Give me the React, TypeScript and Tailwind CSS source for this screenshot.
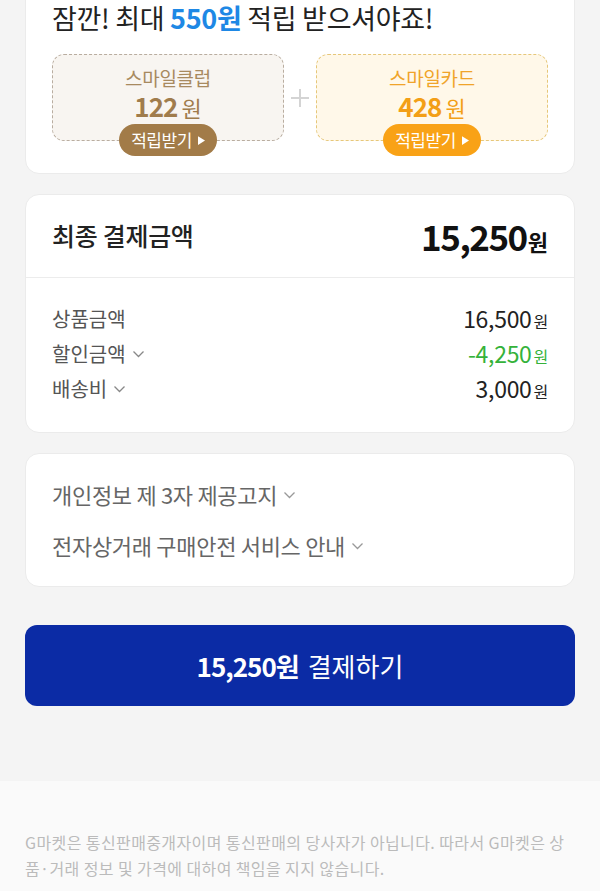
import React from 'react'

const font = { fontFamily: '"Noto Sans CJK KR", "Noto Sans", sans-serif' }

const Chevron = ({ className = '' }: { className?: string }) => (
  <svg viewBox="0 0 12 8" className={className} fill="none" stroke="currentColor" strokeWidth="1.3">
    <path d="M1 1.5 L6 6.5 L11 1.5" />
  </svg>
)

const RewardBox = ({ title, amount, tone }: { title: string; amount: string; tone: 'club' | 'card' }) => {
  const club = tone === 'club'
  return (
    <div className="relative flex-1">
      <div
        className={`h-[87px] rounded-[12px] border border-dashed flex flex-col items-center pt-[11px] ${
          club ? 'bg-[#f8f5f1] border-[#b9ada0]' : 'bg-[#fff8e9] border-[#e6c77a]'
        }`}
      >
        <div className={`text-[19px] leading-[24px] tracking-[-0.3px] ${club ? 'text-[#a88a5f]' : 'text-[#f0a42a]'}`}>{title}</div>
        <div className={`mt-[2px] flex items-baseline gap-[4px] leading-[28px] ${club ? 'text-[#a07c4c]' : 'text-[#f39f16]'}`}>
          <span className="text-[26px] font-bold tracking-[-1px]">{amount}</span>
          <span className="text-[22px]">원</span>
        </div>
      </div>
      <div className="absolute left-0 right-0 top-[70px] flex justify-center">
        <div
          className={`h-[32px] px-[12px] rounded-full flex items-center gap-[6px] text-white text-[17px] tracking-[-0.5px] ${
            club ? 'bg-[#a27b48]' : 'bg-[#f9a216]'
          }`}
        >
          적립받기
          <svg viewBox="0 0 8 10" className="w-[7px] h-[9px]" fill="currentColor">
            <path d="M0 0 L8 5 L0 10 Z" />
          </svg>
        </div>
      </div>
    </div>
  )
}

const Row = ({ label, value, chevron, green }: { label: string; value: string; chevron?: boolean; green?: boolean }) => (
  <div className="flex items-center justify-between h-[35px]">
    <div className="flex items-center gap-[6px] text-[20px] text-[#555]">
      {label}
      {chevron && <Chevron className="w-[13px] h-[8px] text-[#888]" />}
    </div>
    <div className={`flex items-baseline text-[23px] tracking-[-0.3px] ${green ? 'text-[#35b23a]' : 'text-[#222]'}`}>
      {value}
      <span className="text-[16px] ml-[2px]">원</span>
    </div>
  </div>
)

export default function App() {
  return (
    <div className="w-[600px] h-[891px] overflow-hidden bg-[#f4f4f4]" style={font}>
      <div className="px-[25px]">
        <div className="-mt-[20px] bg-white rounded-[14px] border border-[#ebebeb] px-[26px] pt-[18px] pb-[16px]">
          <div className="text-[27px] leading-[38px] text-[#222] tracking-[-0.3px]">
            잠깐! 최대 <span className="font-bold text-[#1e88e5]">550원</span> 적립 받으셔야죠!
          </div>
          <div className="flex items-center mt-[17px] pb-[16px]">
            <RewardBox title="스마일클럽" amount="122" tone="club" />
            <div className="w-[32px] flex justify-center">
              <svg viewBox="0 0 20 20" className="w-[20px] h-[20px] text-[#d4d4d4]" stroke="currentColor" strokeWidth="2">
                <path d="M10 1 V19 M1 10 H19" />
              </svg>
            </div>
            <RewardBox title="스마일카드" amount="428" tone="card" />
          </div>
        </div>

        <div className="mt-[20px] bg-white rounded-[14px] border border-[#ebebeb]">
          <div className="h-[83px] px-[26px] flex items-center justify-between border-b border-[#ececec]">
            <div className="text-[25px] font-medium text-[#222] tracking-[-0.3px]">최종 결제금액</div>
            <div className="flex items-baseline text-[#111]">
              <span className="text-[35px] font-bold tracking-[-1.5px]">15,250</span>
              <span className="text-[22px] font-bold ml-[1px]">원</span>
            </div>
          </div>
          <div className="px-[26px] pt-[23px] pb-[26px]">
            <Row label="상품금액" value="16,500" />
            <Row label="할인금액" value="-4,250" chevron green />
            <Row label="배송비" value="3,000" chevron />
          </div>
        </div>

        <div className="mt-[20px] bg-white rounded-[14px] border border-[#ebebeb] px-[26px] py-[23px] flex flex-col gap-[16px]">
          {['개인정보 제 3자 제공고지', '전자상거래 구매안전 서비스 안내'].map((t) => (
            <div key={t} className="flex items-center gap-[6px] h-[35px] text-[22px] text-[#666] tracking-[-0.3px]">
              {t}
              <Chevron className="w-[13px] h-[8px] text-[#999]" />
            </div>
          ))}
        </div>

        <button className="mt-[38px] w-full h-[81px] rounded-[12px] bg-[#0b2ba5] text-white text-[26px] flex items-center justify-center gap-[9px]">
          <span className="font-bold tracking-[-1px]">15,250원</span>
          <span>결제하기</span>
        </button>
      </div>

      <div className="mt-[75px] bg-[#fafafa] h-[200px] px-[25px] pt-[48px] text-[16px] leading-[26px] tracking-[0.4px] text-[#bbb] break-all">
        G마켓은 통신판매중개자이며 통신판매의 당사자가 아닙니다. 따라서 G마켓은 상품·거래 정보 및 가격에 대하여 책임을 지지 않습니다.
      </div>
    </div>
  )
}
